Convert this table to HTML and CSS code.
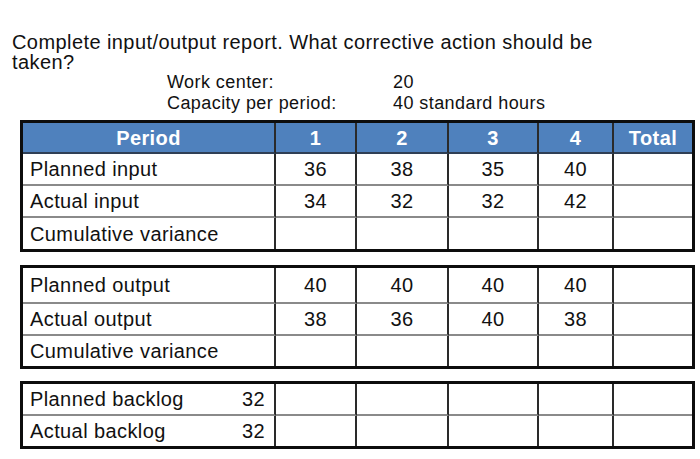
FILE: index.html
```html
<!DOCTYPE html>
<html>
<head>
<meta charset="utf-8">
<link rel="stylesheet" href="styles.css">
</head>
<body>
<div class="page">
  <p class="question">Complete input/output report. What corrective action should be<br>taken?</p>
  <div class="info">
    <span class="label">Work center:</span><span class="value">20</span>
    <span class="label">Capacity per period:</span><span class="value">40 standard hours</span>
  </div>

  <table class="io first">
    <colgroup><col class="w1"><col class="w2"><col class="w3"><col class="w4"><col class="w5"><col class="w6"></colgroup>
    <tr class="head h31"><th>Period</th><th>1</th><th>2</th><th>3</th><th>4</th><th>Total</th></tr>
    <tr class="h32"><td class="name">Planned input</td><td>36</td><td>38</td><td>35</td><td>40</td><td></td></tr>
    <tr class="h32"><td class="name">Actual input</td><td>34</td><td>32</td><td>32</td><td>42</td><td></td></tr>
    <tr class="h31"><td class="name">Cumulative variance</td><td></td><td></td><td></td><td></td><td></td></tr>
  </table>

  <table class="io second">
    <colgroup><col class="w1"><col class="w2"><col class="w3"><col class="w4"><col class="w5"><col class="w6"></colgroup>
    <tr class="h36"><td class="name">Planned output</td><td>40</td><td>40</td><td>40</td><td>40</td><td></td></tr>
    <tr class="h32"><td class="name">Actual output</td><td>38</td><td>36</td><td>40</td><td>38</td><td></td></tr>
    <tr class="h30"><td class="name">Cumulative variance</td><td></td><td></td><td></td><td></td><td></td></tr>
  </table>

  <table class="io third">
    <colgroup><col class="w1"><col class="w2"><col class="w3"><col class="w4"><col class="w5"><col class="w6"></colgroup>
    <tr class="h32"><td class="name"><span class="split"><span>Planned backlog</span><span>32</span></span></td><td></td><td></td><td></td><td></td><td></td></tr>
    <tr class="h30"><td class="name"><span class="split"><span>Actual backlog</span><span>32</span></span></td><td></td><td></td><td></td><td></td><td></td></tr>
  </table>
</div>
</body>
</html>
```

FILE: styles.css
```css
html, body {
  margin: 0;
  padding: 0;
  background: #ffffff;
}

body {
  font-family: "Liberation Sans", Arial, Helvetica, sans-serif;
  color: #111111;
}

.page {
  padding: 32px 0 0 0;
}

.question {
  margin: 0 0 0 12px;
  font-size: 20px;
  line-height: 20px;
  letter-spacing: 0.42px;
}

.info {
  margin: 0 0 0 167px;
  display: grid;
  grid-template-columns: 226px auto;
  font-size: 18px;
  line-height: 21px;
  letter-spacing: 0.43px;
}

.io {
  margin: 6px 0 0 20px;
  width: 675px;
  table-layout: fixed;
  border-collapse: separate;
  border-spacing: 0;
  border: 3px solid #0d0d0d;
  font-size: 20px;
  letter-spacing: 0.4px;
}

.io.second {
  margin-top: 13px;
}

.io.third {
  margin-top: 12px;
}

.w1 { width: 253px; }
.w2 { width: 81px; }
.w3 { width: 92px; }
.w4 { width: 90px; }
.w5 { width: 75px; }
.w6 { width: 78px; }

.io th,
.io td {
  box-sizing: border-box;
  padding: 0;
  text-align: center;
  vertical-align: middle;
  border-right: 2px solid #2a2a2a;
  border-bottom: 2px solid #8a8a8a;
  line-height: 20px;
}

.io th:last-child,
.io td:last-child {
  border-right: none;
}

.io tr:last-child td {
  border-bottom: none;
}

.io .head th {
  background: #4f81bd;
  color: #ffffff;
  font-weight: bold;
  border-bottom-color: #2f3f55;
}

.io td.name {
  text-align: left;
  padding: 0 9px 0 7px;
}

.split {
  display: flex;
  justify-content: space-between;
}

.h30 { height: 30px; }
.h31 { height: 31px; }
.h32 { height: 32px; }
.h36 { height: 36px; }
```
